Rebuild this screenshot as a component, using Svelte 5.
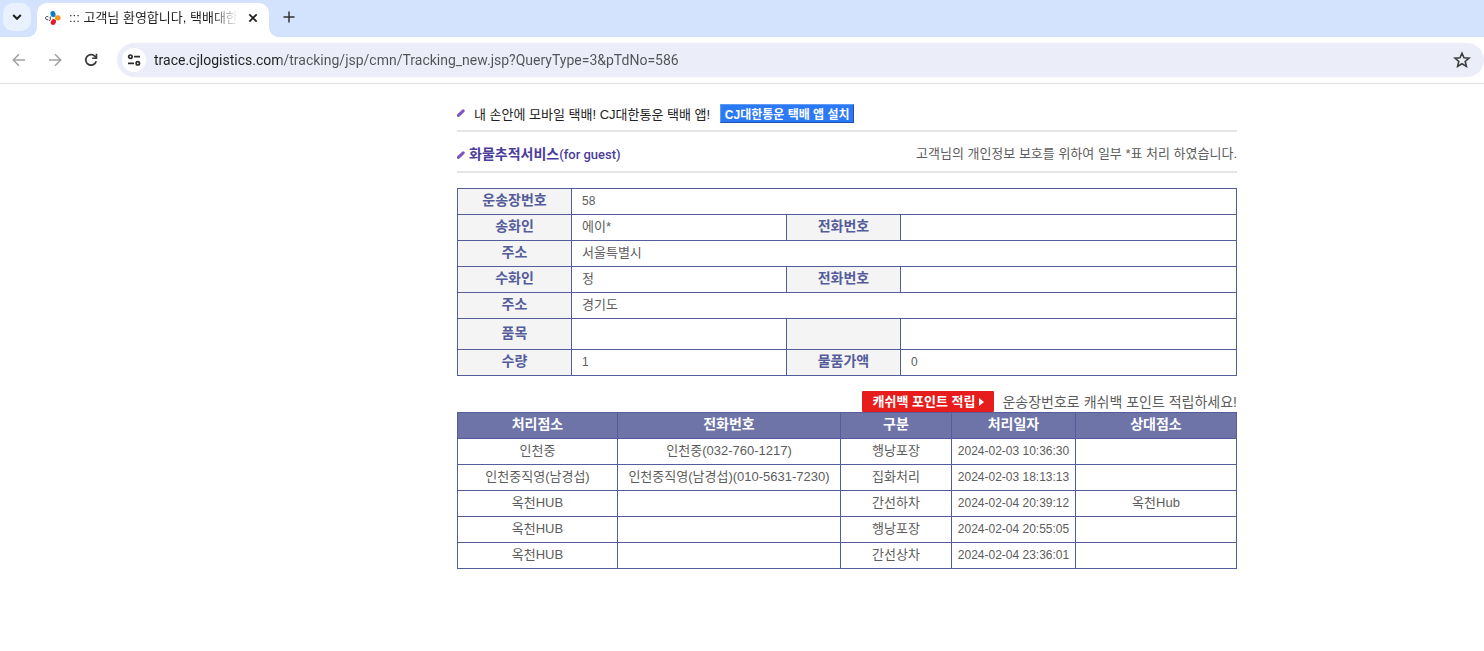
<script>
  const steps = [
    ['인천중', '인천중(032-760-1217)', '행낭포장', '2024-02-03 10:36:30', ''],
    ['인천중직영(남경섭)', '인천중직영(남경섭)(010-5631-7230)', '집화처리', '2024-02-03 18:13:13', ''],
    ['옥천HUB', '', '간선하차', '2024-02-04 20:39:12', '옥천Hub'],
    ['옥천HUB', '', '행낭포장', '2024-02-04 20:55:05', ''],
    ['옥천HUB', '', '간선상차', '2024-02-04 23:36:01', '']
  ];
</script>

<div class="window">
  <header class="tabstrip">
    <button class="tabsearch" aria-label="탭 검색">
      <svg width="28" height="28" viewBox="0 0 28 28"><path d="M10.2 12l3.8 3.8 3.8-3.8" fill="none" stroke="#1f1f1f" stroke-width="2" /></svg>
    </button>
    <div class="tab">
      <svg class="favicon" width="16" height="16" viewBox="0 0 16 16">
        <path d="M3.300 6.800C1.700 5.900.6 6.700.6 8s1.100 2.300 2.600 1.500M5.300 6.500v2.800c0 1.100-.8 1.400-1.500 1.200" fill="none" stroke="#444" stroke-width="1" />
        <ellipse cx="8" cy="4" rx="2.500" ry="3.200" fill="#0f7fc2" transform="rotate(-14 8 4)" />
        <ellipse cx="12.800" cy="7.800" rx="2.900" ry="2.500" fill="#f59a1b" transform="rotate(14 12.800 7.800)" />
        <ellipse cx="8.400" cy="12" rx="2.500" ry="3" fill="#e8192c" transform="rotate(25 8.400 12)" />
      </svg>
      <span class="tabtitle">::: 고객님 환영합니다, 택배대한</span>
      <button class="close" aria-label="탭 닫기">
        <svg width="16" height="16" viewBox="0 0 16 16"><path d="M4.300 4.300l7.400 7.400M11.700 4.300l-7.400 7.400" stroke="#1f1f1f" stroke-width="1.700" /></svg>
      </button>
    </div>
    <button class="newtab" aria-label="새 탭">
      <svg width="20" height="20" viewBox="0 0 20 20"><path d="M10 4.500v11M4.500 10h11" stroke="#333" stroke-width="1.500" /></svg>
    </button>
  </header>

  <nav class="toolbar">
    <button aria-label="뒤로"><svg width="20" height="20" viewBox="0 0 20 20"><path d="M16 10H4.500M10 4.300L4.300 10l5.700 5.700" fill="none" stroke="#a3a3a3" stroke-width="1.600" /></svg></button>
    <button aria-label="앞으로"><svg width="20" height="20" viewBox="0 0 20 20"><path d="M4 10h11.500M10 4.300l5.700 5.700-5.700 5.700" fill="none" stroke="#a3a3a3" stroke-width="1.600" /></svg></button>
    <button aria-label="새로고침"><svg width="20" height="20" viewBox="0 0 20 20"><path d="M15.200 11.200A5.300 5.300 0 1 1 14 6.300l1.500 1.500" fill="none" stroke="#3c3c3c" stroke-width="1.800" /><path d="M16.300 3.800v5.200h-5.200V7.400h3.500V3.800z" fill="#3c3c3c" /></svg></button>
    <div class="omnibox">
      <button class="site" aria-label="사이트 정보 보기">
        <svg width="16" height="16" viewBox="0 0 16 16" fill="none" stroke="#2b2b2b" stroke-width="1.700"><circle cx="4.400" cy="4.700" r="1.700" /><path d="M8 4.700h6M2 11.300h6" /><circle cx="11.800" cy="11.300" r="1.700" /></svg>
      </button>
      <input class="url" type="text" aria-label="주소창" value="trace.cjlogistics.com/tracking/jsp/cmn/Tracking_new.jsp?QueryType=3&pTdNo=586" />
      <button class="star" aria-label="북마크">
        <svg width="20" height="20" viewBox="0 0 20 20"><path d="M10 3.200l2 4.600 5 .4-3.800 3.300 1.200 4.900-4.400-2.600-4.400 2.600 1.200-4.900L3 8.200l5-.4z" fill="none" stroke="#3c3c3c" stroke-width="1.600" /></svg>
      </button>
    </div>
  </nav>

  <main>
    <div class="content">
      <div class="promo">
        {@render bullet()}
        <span>내 손안에 모바일 택배! CJ대한통운 택배 앱!</span>
        <button class="install">CJ대한통운 택배 앱 설치</button>
      </div>
      <div class="heading">
        {@render bullet()}
        <h1>화물추적서비스<span>(for guest)</span></h1>
        <p>고객님의 개인정보 보호를 위하여 일부 *표 처리 하였습니다.</p>
      </div>

      <table class="info">
        <colgroup><col class="label" /><col class="first" /><col class="label" /><col /></colgroup>
        <tbody>
          <tr><th scope="row">운송장번호</th><td class="num" colspan="3">58</td></tr>
          <tr><th scope="row">송화인</th><td>에이*</td><th scope="row">전화번호</th><td></td></tr>
          <tr><th scope="row">주소</th><td colspan="3">서울특별시</td></tr>
          <tr><th scope="row">수화인</th><td>정</td><th scope="row">전화번호</th><td></td></tr>
          <tr><th scope="row">주소</th><td colspan="3">경기도</td></tr>
          <tr class="tall"><th scope="row">품목</th><td></td><th></th><td></td></tr>
          <tr><th scope="row">수량</th><td class="num">1</td><th scope="row">물품가액</th><td class="num">0</td></tr>
        </tbody>
      </table>

      <div class="cashbag">
        <button class="points">캐쉬백 포인트 적립<svg width="5" height="8" viewBox="0 0 5 8"><path d="M0 0l5 4-5 4z" fill="#fff" /></svg></button>
        <span>운송장번호로 캐쉬백 포인트 적립하세요!</span>
      </div>

      <table class="steps">
        <colgroup><col class="office" /><col class="phone" /><col class="kind" /><col class="date" /><col /></colgroup>
        <thead>
          <tr><th scope="col">처리점소</th><th scope="col">전화번호</th><th scope="col">구분</th><th scope="col">처리일자</th><th scope="col">상대점소</th></tr>
        </thead>
        <tbody>
          {#each steps as row}
            <tr>{#each row as cell, i}<td class:num={i === 3}>{cell}</td>{/each}</tr>
          {/each}
        </tbody>
      </table>
    </div>
  </main>
</div>

{#snippet bullet()}
  <svg class="bullet" width="8" height="8" viewBox="0 0 8 8"><path d="M1.400 6.400L6.200 1.800" stroke="#7d55bd" stroke-width="3" stroke-linecap="round" /></svg>
{/snippet}

<style>
  :global(body) { margin: 0; background: #fff; }
  .window { font-family: "Liberation Sans", "Noto Sans CJK KR", sans-serif; font-size: 13px; color: #5c5c5c; }
  button { border: 0; padding: 0; background: none; font: inherit; color: inherit; display: flex; align-items: center; justify-content: center; }
  svg { display: block; flex: none; }

  .tabstrip { display: flex; align-items: flex-start; height: 37px; background: #d3e2fd; }
  .tabsearch { width: 28px; height: 28px; margin: 3px 6px 0 3px; border-radius: 10px; background: #eaf1fe; }
  .tab { position: relative; display: flex; align-items: center; width: 232px; height: 34px; margin-top: 3px; padding: 0 8px 4px; box-sizing: border-box; border-radius: 10px 10px 0 0; background: #fff; }
  .tab::before, .tab::after { content: ""; position: absolute; bottom: 0; width: 10px; height: 10px; }
  .tab::before { left: -10px; background: radial-gradient(circle at 0 0, transparent 10px, #fff 10px); }
  .tab::after { right: -10px; background: radial-gradient(circle at 100% 0, transparent 10px, #fff 10px); }
  .tabtitle { flex: 1; margin-left: 8px; white-space: nowrap; line-height: 20px; color: #1f1f1f; -webkit-mask-image: linear-gradient(90deg, #000 84%, transparent); mask-image: linear-gradient(90deg, #000 84%, transparent); }
  .close { margin-left: 7px; }
  .newtab { margin: 7px 0 0 10px; }

  .toolbar { display: flex; align-items: center; height: 46px; padding-left: 9px; gap: 16px; border-bottom: 1px solid #dfe1e5; background: #fff; }
  .omnibox { flex: 1; display: flex; align-items: center; height: 34px; border-radius: 17px; background: #ebeef8; }
  .site { width: 24px; height: 24px; margin-left: 5px; border-radius: 12px; background: #fff; }
  .url { flex: 1; min-width: 0; margin-left: 8px; padding: 0; border: 0; outline: 0; font: 14px/20px Roboto, sans-serif; color: #1f1f1f; background: linear-gradient(90deg, #1f1f1f 126px, #505256 126px); -webkit-background-clip: text; background-clip: text; -webkit-text-fill-color: transparent; }
  .star { margin-right: 12px; }

  main { padding: 16px 0 24px 210px; }
  .content { max-width: 780px; margin: 0 auto; }
  .promo, .heading { display: flex; align-items: center; box-sizing: border-box; border-bottom: 2px solid #e5e5e5; }
  .promo { height: 32px; padding-bottom: 4px; color: #222; }
  .promo span { margin: 0 10px 0 9px; }
  .install { width: 134px; height: 19px; border: 1px solid; border-color: #5c9cf8 #1c4fae #1c4fae #5c9cf8; background: #2b79f5; color: #fff; font-size: 12px; font-weight: 700; }
  .heading { height: 41px; margin-bottom: 15px; padding-top: 6px; }
  h1 { margin: 0 auto 0 4px; font-size: 14px; line-height: 20px; font-weight: 700; color: #4b3c9c; }
  h1 span { font-family: Roboto, sans-serif; font-size: 13px; font-weight: 500; }
  p { margin: 0; line-height: 20px; padding-bottom: 2px; }

  table { width: 100%; border-collapse: collapse; table-layout: fixed; }
  th, td { height: 24px; padding: 0 0 1px; border: 1px solid #555c9b; line-height: 20px; }
  th { height: 22px; padding-bottom: 3px; }
  .info th { background: #f4f4f4; color: #555c9b; font-size: 14px; }
  .info td { padding-left: 10px; }
  .info .tall th { height: 27px; }
  .label { width: 114px; }
  .first { width: 215px; }
  .num { font-size: 12px; }
  .steps th { background: #6e74a7; color: #fff; font-size: 14px; }
  .steps td { text-align: center; }
  .office { width: 160px; }
  .phone { width: 223px; }
  .kind { width: 111px; }
  .date { width: 124px; }

  .cashbag { display: flex; align-items: flex-end; justify-content: flex-end; gap: 8px; height: 36px; font-size: 14px; line-height: 20px; }
  .points { width: 132px; height: 21px; gap: 4px; border-radius: 1px; background: #e71d1d; color: #fff; font-size: 13px; font-weight: 700; }
</style>
